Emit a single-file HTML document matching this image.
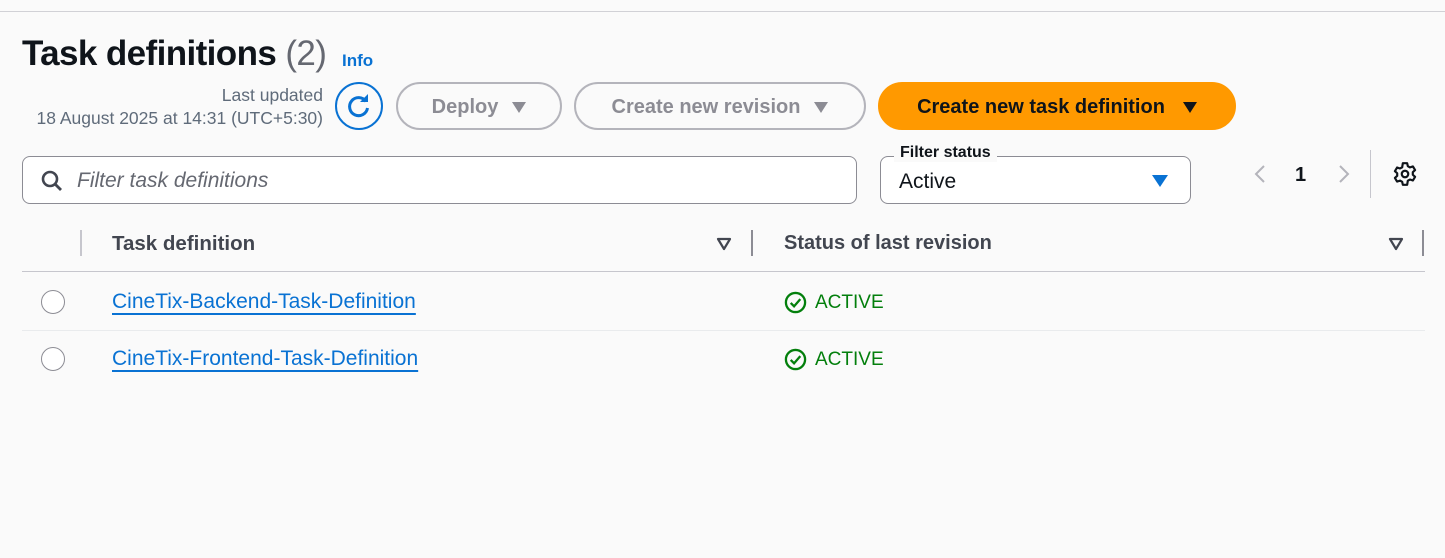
<!DOCTYPE html>
<html><head><meta charset="utf-8"><style>
*{box-sizing:border-box;margin:0;padding:0}
body{width:1445px;height:558px;background:#fafafa;font-family:"Liberation Sans",sans-serif;position:relative;overflow:hidden;color:#0f141a}
.a{position:absolute;white-space:nowrap}
.btn{position:absolute;border:2px solid #b4b4bb;border-radius:24px;height:48px;top:82px;color:#8c8c94;font-weight:bold;font-size:20px;display:flex;align-items:center;justify-content:center;gap:14px;background:#fafafa;padding-top:2px}
.tri{width:0;height:0;border-left:7px solid transparent;border-right:7px solid transparent;border-top:11px solid currentColor}
.link{color:#0972d3;font-size:21px;text-decoration:underline;text-underline-offset:5px;text-decoration-thickness:2px}
.act{color:#037f0c;font-size:19px;display:flex;align-items:center;gap:8px}
</style></head><body>
<div class="a" style="left:0;top:11px;width:1445px;height:1px;background:#d1d1d6"></div>
<div class="a" style="left:22px;top:34px;font-size:35px;font-weight:bold;letter-spacing:-0.6px">Task definitions <span style="font-weight:normal;color:#656871">(2)</span></div>
<div class="a" style="left:342px;top:51px;font-size:17px;font-weight:bold;color:#0972d3">Info</div>
<div class="a" style="right:1122px;top:84px;font-size:17.5px;color:#5f6b7a;text-align:right;line-height:23px">Last updated<br>18 August 2025 at 14:31 (UTC+5:30)</div>
<div class="a" style="left:335px;top:82px;width:48px;height:48px;border:2px solid #0972d3;border-radius:50%;display:flex;align-items:center;justify-content:center">
<svg width="26" height="26" viewBox="0 0 26 26"><path d="M20 8.5A9 9 0 1 0 21.5 15" fill="none" stroke="#0972d3" stroke-width="3"/><path d="M14 9h8V1z" fill="#0972d3"/></svg></div>
<div class="btn" style="left:396px;width:166px">Deploy <span class="tri"></span></div>
<div class="btn" style="left:574px;width:292px">Create new revision <span class="tri"></span></div>
<div class="btn" style="left:878px;width:358px;background:#ff9900;border-color:#ff9900;color:#0f141a">Create new task definition <span class="tri" style="margin-left:4px"></span></div>
<div class="a" style="left:22px;top:156px;width:835px;height:48px;border:1px solid #8c8c94;border-radius:8px;background:#fff"></div>
<svg class="a" style="left:40px;top:169px" width="24" height="24" viewBox="0 0 24 24"><circle cx="10" cy="10" r="7" fill="none" stroke="#424650" stroke-width="2.6"/><path d="M15 15l6 6" stroke="#424650" stroke-width="2.8"/></svg>
<div class="a" style="left:77px;top:169px;font-size:21px;font-style:italic;color:#656871">Filter task definitions</div>
<div class="a" style="left:880px;top:156px;width:311px;height:48px;border:1px solid #8c8c94;border-radius:8px;background:#fff"></div>
<div class="a" style="left:894px;top:144px;font-size:16px;font-weight:bold;background:#fafafa;padding:0 6px">Filter status</div>
<div class="a" style="left:899px;top:170px;font-size:21px">Active</div>
<div class="a" style="left:1152px;top:175px;border-left:8px solid transparent;border-right:8px solid transparent;border-top:12px solid #0972d3"></div>
<svg class="a" style="left:1250px;top:163px" width="20" height="22"><path d="M14 3L6 11l8 8" fill="none" stroke="#b4b4bb" stroke-width="2"/></svg>
<div class="a" style="left:1295px;top:164px;font-size:20px;font-weight:bold">1</div>
<svg class="a" style="left:1334px;top:163px" width="20" height="22"><path d="M6 3l8 8-8 8" fill="none" stroke="#b4b4bb" stroke-width="2"/></svg>
<div class="a" style="left:1370px;top:150px;width:1px;height:48px;background:#c6c6cd"></div>
<svg class="a" style="left:1392px;top:161px" width="26" height="26" viewBox="0 0 24 24"><path d="M10 2h4l.6 2.8 2 1.1 2.7-.9 2 3.4-2.1 1.9v2.4l2.1 1.9-2 3.4-2.7-.9-2 1.1L14 22h-4l-.6-2.8-2-1.1-2.7.9-2-3.4 2.1-1.9v-2.4L2.7 9.4l2-3.4 2.7.9 2-1.1z" fill="none" stroke="#0f141a" stroke-width="2" stroke-linejoin="round"/><circle cx="12" cy="12" r="3" fill="none" stroke="#0f141a" stroke-width="2"/></svg>
<div class="a" style="left:80px;top:230px;width:2px;height:26px;background:#c6c6cd"></div>
<div class="a" style="left:112px;top:232px;font-size:20.5px;font-weight:bold;color:#424650">Task definition</div>
<svg class="a" style="left:716px;top:237px" width="16" height="14"><path d="M2 2h12L8 12z" fill="none" stroke="#424650" stroke-width="2.2" stroke-linejoin="round"/></svg>
<div class="a" style="left:751px;top:230px;width:2px;height:26px;background:#8c8c94"></div>
<div class="a" style="left:784px;top:232px;font-size:20px;font-weight:bold;color:#424650">Status of last revision</div>
<svg class="a" style="left:1388px;top:237px" width="16" height="14"><path d="M2 2h12L8 12z" fill="none" stroke="#424650" stroke-width="2.2" stroke-linejoin="round"/></svg>
<div class="a" style="left:1422px;top:230px;width:2px;height:26px;background:#8c8c94"></div>
<div class="a" style="left:22px;top:271px;width:1403px;height:1px;background:#c6c6cd"></div>
<div class="a" style="left:22px;top:330px;width:1403px;height:1px;background:#e9ebed"></div>
<div class="a" style="left:41px;top:290px;width:24px;height:24px;border:1.5px solid #8c8c94;border-radius:50%;background:#fff"></div>
<div class="a" style="left:41px;top:347px;width:24px;height:24px;border:1.5px solid #8c8c94;border-radius:50%;background:#fff"></div>
<div class="a link" style="left:112px;top:290px">CineTix-Backend-Task-Definition</div>
<div class="a link" style="left:112px;top:347px">CineTix-Frontend-Task-Definition</div>
<div class="a act" style="left:784px;top:291px"><svg width="23" height="23" viewBox="0 0 24 24"><circle cx="12" cy="12" r="10" fill="none" stroke="#037f0c" stroke-width="2.4"/><path d="M7 12.5l3.5 3.5L17 8.5" fill="none" stroke="#037f0c" stroke-width="2.4"/></svg>ACTIVE</div>
<div class="a act" style="left:784px;top:348px"><svg width="23" height="23" viewBox="0 0 24 24"><circle cx="12" cy="12" r="10" fill="none" stroke="#037f0c" stroke-width="2.4"/><path d="M7 12.5l3.5 3.5L17 8.5" fill="none" stroke="#037f0c" stroke-width="2.4"/></svg>ACTIVE</div>
</body></html>
